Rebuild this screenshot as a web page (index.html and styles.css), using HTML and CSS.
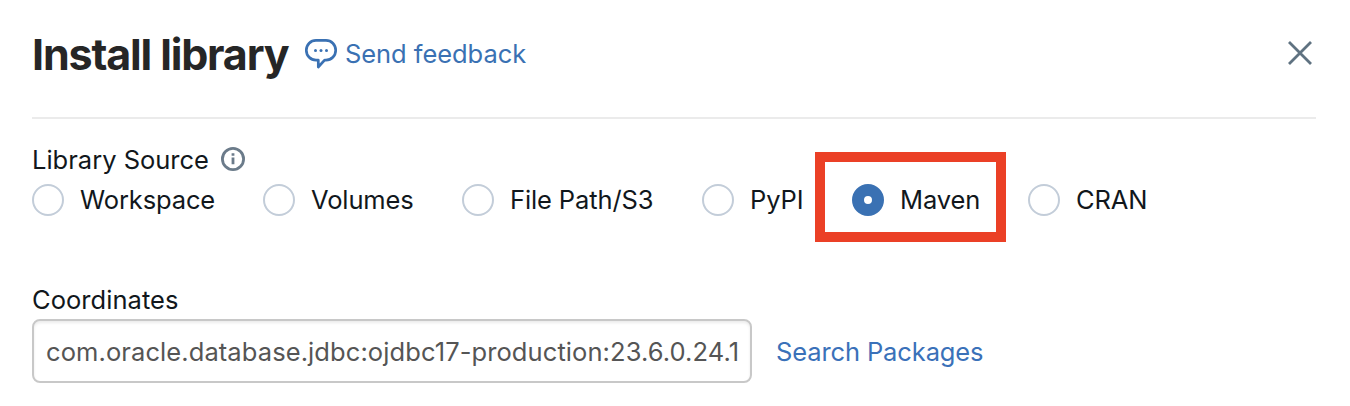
FILE: index.html
```html
<!DOCTYPE html>
<html lang="en">
<head>
<meta charset="utf-8">
<title>Install library</title>
<link rel="stylesheet" href="styles.css">
</head>
<body>
<main class="dialog">
  <header class="header">
    <h1 class="title">Install library</h1>
    <a class="feedback">
      <svg class="feedback-icon" width="34" height="32" viewBox="0 0 34 32" fill="none" stroke="currentColor" stroke-width="2.7" stroke-linejoin="round">
        <path d="M12 2.4H22A9.7 9.9 0 0 1 22 22.2H20.6L14.3 29V22.2H12A9.7 9.9 0 0 1 12 2.4Z"/>
        <g fill="currentColor" stroke="none"><circle cx="11.5" cy="12.6" r="1.5"/><circle cx="17" cy="12.6" r="1.5"/><circle cx="22.5" cy="12.6" r="1.5"/></g>
      </svg>
      <span class="feedback-text">Send feedback</span>
    </a>
    <svg class="close" width="26" height="26" viewBox="0 0 26 26" fill="none" stroke="currentColor" stroke-width="2.8"><path d="M2 2L24 24M24 2L2 24"/></svg>
  </header>
  <section class="source">
    <div class="label-row">
      <span class="label label-source">Library Source</span>
      <svg class="info" width="24" height="24" viewBox="0 0 24 24" fill="none"><circle cx="12" cy="12" r="10.6" stroke="currentColor" stroke-width="2.8"/><path d="M10.6 6.2h2.8v2.6h-2.8zM10.6 10.6h2.8v6.6h-2.8z" fill="currentColor"/></svg>
    </div>
    <div class="options">
      <div class="option"><span class="radio"></span><span>Workspace</span></div>
      <div class="option"><span class="radio"></span><span>Volumes</span></div>
      <div class="option"><span class="radio"></span><span>File Path/S3</span></div>
      <div class="option"><span class="radio"></span><span>PyPI</span></div>
      <div class="option option-marked"><span class="radio radio-on"></span><span>Maven</span></div>
      <div class="option"><span class="radio"></span><span>CRAN</span></div>
    </div>
  </section>
  <section class="coordinates">
    <div class="label label-coordinates">Coordinates</div>
    <div class="field-row">
      <div class="input"><div class="value">com.oracle.database.jdbc:ojdbc17-production:23.6.0.24.1</div></div>
      <a class="search">Search Packages</a>
    </div>
  </section>
</main>
</body>
</html>
```
FILE: styles.css
```css
*, *::after { box-sizing: border-box; }
body { margin: 0; background: #fff; color: #11171c; font: 25.5px/32px Inter, "Liberation Sans", sans-serif; white-space: nowrap; overflow: hidden; }
.dialog { height: 406px; padding: 0 34px 0 32px; }
.header { display: flex; align-items: center; height: 119px; padding-bottom: 11px; border-bottom: 2px solid #ebebeb; }
.title { width: 272px; margin: 0; padding-top: 2px; font-size: 43px; line-height: 52px; font-weight: 700; letter-spacing: -1.15px; color: #262626; }
.feedback { display: flex; align-items: center; padding-top: 2px; color: #3a71b3; letter-spacing: -0.06px; }
.feedback-icon { flex: none; margin-right: 7px; }
.close { margin: 0 3px 0 auto; color: #5f7281; }
.source { padding-top: 25px; }
.label-row { display: flex; align-items: center; height: 32px; }
.label-source { width: 189px; }
.info { margin-bottom: 2px; color: #6b7b8a; }
.options { display: grid; grid-template-columns: 231px 199px 240px 150px 176px 130px; align-items: center; height: 48px; letter-spacing: -0.12px; }
.option { position: relative; display: flex; align-items: center; }
.radio { flex: none; width: 32px; height: 32px; margin-right: 16px; border: 2px solid #c3cdd9; border-radius: 50%; }
.radio-on { border: 12px solid #3a71b3; background: #fff; }
.option-marked::after { content: ""; position: absolute; left: -37px; top: -32px; width: 191px; height: 90px; border: 10px solid #eb4026; }
.coordinates { padding-top: 60px; }
.label-coordinates { height: 35px; letter-spacing: 0.05px; }
.field-row { display: flex; align-items: center; }
.input { width: 720px; height: 64px; margin-right: 24px; padding: 15px 12px 13px; border: 2px solid #c8c8c8; border-radius: 8px; box-shadow: inset 0 2px 3px rgba(0,0,0,.08); color: #555; }
.value { letter-spacing: 0.09px; }
.search { padding-top: 2px; color: #3a71b9; letter-spacing: -0.12px; }
```
